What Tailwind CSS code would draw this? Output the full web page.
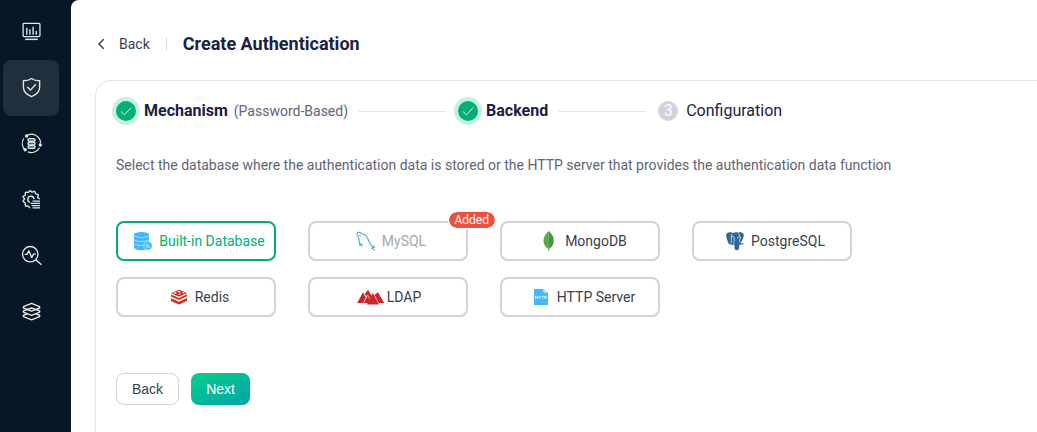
<!DOCTYPE html>
<html lang="en">
<head>
<meta charset="utf-8">
<meta name="viewport" content="width=device-width, initial-scale=1">
<title>Create Authentication</title>
<script src="https://cdn.jsdelivr.net/npm/@tailwindcss/browser@4"></script>
</head>
<body class="flex min-h-screen overflow-x-hidden bg-[#061826] font-['Roboto',sans-serif] text-sm text-[#3a3f4f]">
  <nav aria-label="Main" class="flex w-[71px] shrink-0 flex-col py-1 pl-[3px] text-[#e3e8e8]">
    <a href="#monitoring" aria-label="Monitoring" class="flex size-14 items-center justify-center rounded-lg">
      <svg class="size-5 overflow-visible" viewBox="0 1 19 19" fill="none" stroke="currentColor" stroke-width="1.2"><rect x="2" y="2.200" width="16" height="12.600" rx="1"/><path d="M5.500 6.500V13M8.500 8V13M11.500 5.500V13M14.500 9.500V13" stroke-width="1.300"/><path d="M4 17.500H16" stroke-width="1.400"/></svg>
    </a>
    <a href="#access" aria-label="Access control" aria-current="page" class="flex size-14 items-center justify-center rounded-lg bg-[#202f3c]">
      <svg class="size-5 overflow-visible" viewBox="0 1 19 19" fill="none" stroke="currentColor" stroke-width="1.300" stroke-linejoin="round"><path d="M10 1.400C8.200 2.800 5.200 3.600 2.300 3.600V9.800C2.300 14 5.500 17 10 18.800C14.500 17 17.700 14 17.700 9.800V3.600C14.800 3.600 11.800 2.800 10 1.400Z"/><path d="M6 9.500L9 12.500L14 7"/></svg>
    </a>
    <a href="#integration" aria-label="Integration" class="flex size-14 items-center justify-center rounded-lg">
      <svg class="size-5 overflow-visible" viewBox="0 1 19 19" fill="none" stroke="currentColor" stroke-width="1.200"><path d="M5 2.800A8.700 8.700 0 0 1 18.600 9.500M17.500 14A8.700 8.700 0 0 1 6.500 18M3.700 16A8.700 8.700 0 0 1 2.600 5.300"/><circle cx="5.300" cy="2.900" r="1" fill="currentColor"/><circle cx="18.300" cy="11.500" r="1" fill="currentColor"/><circle cx="4" cy="16" r="1" fill="currentColor"/><g fill="currentColor" fill-opacity=".35"><rect x="6.700" y="5.300" width="6.600" height="2.700" rx="1"/><rect x="6.700" y="8.700" width="6.600" height="2.600" rx="1"/><rect x="6.700" y="12" width="6.600" height="2.700" rx="1"/></g></svg>
    </a>
    <a href="#management" aria-label="Management" class="flex size-14 items-center justify-center rounded-lg">
      <svg class="size-5 overflow-visible" viewBox="0 1 19 19" fill="none" stroke="currentColor" stroke-width="1.300" stroke-linejoin="round"><path d="M8.700 18C8 18 7.700 16.600 6.800 16.300C5.900 16 5 16.900 4.300 16.200C3.600 15.500 4.400 14.400 4.100 13.500C3.800 12.700 2 12.500 2 11.500C2 10.500 3.400 10.400 3.400 9.600C3.400 8.800 2 8.500 2 7.500C2 6.500 3.700 6.500 4.100 5.700C4.500 4.900 3.600 4 4.300 3.300C5 2.600 6 3.600 6.900 3.200C7.700 2.900 7.700 1.700 8.700 1.700C9.600 1.700 9.900 3 10.700 3C11.500 3 11.900 1.900 12.800 2.300C13.800 2.700 13.200 4 13.900 4.600C14.600 5.200 15.900 4.700 16.400 5.500C16.900 6.400 15.600 7 15.800 7.900C16 8.700 17.600 8.900 17.600 9.800"/><path d="M8.400 12.700A3 3 0 1 1 12.400 9.800"/><path d="M11 11.500H18M9 13.700H18M10 15.900H18M11 18H18" stroke-width="1.200"/></svg>
    </a>
    <a href="#diagnose" aria-label="Diagnose" class="flex size-14 items-center justify-center rounded-lg">
      <svg class="size-5 overflow-visible" viewBox="0 1 19 19" fill="none" stroke="currentColor" stroke-width="1.300" stroke-linejoin="round"><circle cx="8.800" cy="8.800" r="7.300"/><path d="M14 14L19.500 18.800"/><path d="M3.500 9H5.700L7.500 5.500L10.200 12L12 8.500H14"/></svg>
    </a>
    <a href="#system" aria-label="System" class="flex size-14 items-center justify-center rounded-lg">
      <svg class="size-5 overflow-visible" viewBox="0 1 19 19" fill="none" stroke="currentColor" stroke-width="1.300" stroke-linejoin="round"><path d="M10 2.400L17.700 5.500V6.700L10 9.700L2.300 6.700V5.500Z"/><path d="M10 6.700L17.700 9.400V10.600L10 13.700L2.300 10.600V9.400Z"/><path d="M6 12.200L2.300 13.600V14.800L10 17.900L17.700 14.800V13.600L14 12.200"/></svg>
    </a>
  </nav>

  <main class="flex min-w-0 flex-1 flex-col rounded-tl-lg bg-white pl-6 pt-8">
    <header class="flex h-6 items-center">
      <a href="#back" class="flex items-center gap-3">
        <svg class="h-3 w-3" viewBox="0 0 12 12" fill="none" stroke="#2b3047" stroke-width="1.300"><path d="M8.700 1.200L4 6L8.700 10.800"/></svg>
        Back
      </a>
      <span class="mx-4 h-3.5 w-px bg-[#d6dae3]"></span>
      <h1 class="text-lg font-bold text-[#1b2045]">Create Authentication</h1>
    </header>

    <section class="mt-6 flex-1 rounded-tl-2xl border-l border-t border-[#e1e3ee] px-5 pt-[18px]">
      <ol class="flex h-6 items-center text-base text-[#1b2045]">
        <li class="flex items-center">
          <span class="flex size-5 items-center justify-center rounded-full bg-[#00b173] ring-4 ring-[#c9efe1]"><svg class="size-3" viewBox="0 0 12 12" fill="none" stroke="#d5f3e8" stroke-width="1"><path d="M1 6.500L4.500 9.800L11.200 2.500"/></svg></span>
          <span class="ml-2 font-bold leading-[26px]">Mechanism</span>
          <span class="ml-1.5 text-sm text-[#5f6577]">(Password-Based)</span>
        </li>
        <li aria-hidden="true" class="ml-2.5 mr-3 h-px w-[88px] bg-[#dfe9e8]"></li>
        <li class="flex items-center" aria-current="step">
          <span class="flex size-5 items-center justify-center rounded-full bg-[#00b173] ring-4 ring-[#c9efe1]"><svg class="size-3" viewBox="0 0 12 12" fill="none" stroke="#d5f3e8" stroke-width="1"><path d="M1 6.500L4.500 9.800L11.200 2.500"/></svg></span>
          <span class="ml-2 font-bold leading-[26px]">Backend</span>
        </li>
        <li aria-hidden="true" class="ml-2.5 mr-3 h-px w-[88px] bg-[#dfe9e8]"></li>
        <li class="flex items-center">
          <span class="flex size-5 items-center justify-center rounded-full bg-[#d0d3de] leading-[26px] text-white">3</span>
          <span class="ml-2 leading-[26px]">Configuration</span>
        </li>
      </ol>

      <form class="mt-8">
        <fieldset>
          <legend class="leading-5 text-[#5f6577]">Select the database where the authentication data is stored or the HTTP server that provides the authentication data function</legend>
          <div class="mt-[46px] flex flex-wrap gap-x-8 gap-y-4">
            <label class="flex h-10 w-40 cursor-pointer items-center justify-center rounded-lg border-2 border-[#00b173] text-[#00b173]">
              <input type="radio" name="backend" value="built-in" checked class="sr-only">
              <svg class="h-6 w-8 shrink-0" viewBox="0 0 32 24"><path d="M7 5.800C7 2 22 2 22 5.800V18.200C22 22 7 22 7 18.200Z" fill="#40b8ff"/><path d="M7 6.500C9.500 9.200 19.500 9.200 22 6.500M7 10.500C9.500 13.200 19.500 13.200 22 10.500M7 14.500C9.500 17.200 18 17.200 22 14.500" fill="none" stroke="#d0eeff" stroke-width=".7"/><circle cx="21" cy="16.800" r="4.200" fill="#40b8ff" stroke="#fff" stroke-width=".5"/><path d="M19 15.200H20.500L23 18.200H19ZM21.500 15.700H23" fill="#8fd6ff" stroke="#b0e3ff" stroke-width=".5"/></svg>
              Built-in Database
            </label>
            <label class="relative flex h-10 w-40 items-center justify-center rounded-lg border-2 border-[#d0d3de] text-[#a4a8b4]">
              <input type="radio" name="backend" value="mysql" disabled class="sr-only">
              <svg class="h-6 w-8 shrink-0" viewBox="0 0 32 24" fill="none" stroke="#45aad8" stroke-width="1.100" stroke-linecap="round" stroke-linejoin="round"><path d="M12.300 17C11.500 16.400 11.300 15.200 11 14.600C10.400 16 10.200 17 9.700 15.800C9.100 14.200 9.400 12 8.900 10.200C8.400 8.400 7.700 7.500 7.300 5.700C6.700 3.400 7.600 3 9.300 3.400C10.500 3.700 11 4.500 12.200 4.700C15.600 5.300 17.700 8.800 18.800 12C19.400 13.800 20 15.600 21.300 16.300C22.500 16.900 23.800 17.100 24.700 18.300C23 18.300 21.900 18.500 21.800 19C22.700 19.600 23.900 20.100 24.500 21"/><path d="M9.700 6.200L10.300 7"/></svg>
              MySQL
              <span class="absolute -right-[30px] -top-3 flex h-[18px] items-center rounded-full border border-white bg-[#eb4f3d] bg-clip-padding px-1.5 text-xs leading-4 text-white">Added</span>
            </label>
            <label class="flex h-10 w-40 cursor-pointer items-center justify-center rounded-lg border-2 border-[#d0d3de]">
              <input type="radio" name="backend" value="mongodb" class="sr-only">
              <svg class="h-6 w-8 shrink-0" viewBox="0 0 32 24"><path d="M15.600 1.800C12.500 5 10.500 8 10.500 12C10.500 15.500 12.500 18 15.300 20L15.600 22.300H16.200L16.200 20Z" fill="#58a84e"/><path d="M15.600 1.800C19 5 20.800 8 20.800 12C20.800 15.500 18.800 18 16.200 20Z" fill="#449644"/><path d="M15.700 18V22.400H16.400L16.300 19Z" fill="#b8c5a0"/></svg>
              MongoDB
            </label>
            <label class="flex h-10 w-40 cursor-pointer items-center justify-center rounded-lg border-2 border-[#d0d3de]">
              <input type="radio" name="backend" value="postgresql" class="sr-only">
              <svg class="h-6 w-8 shrink-0" viewBox="0 0 32 24"><path d="M7.200 7C6.900 4.600 8.500 3.200 11 3.200C12.500 3.200 13.300 3.500 14.200 3.900C15.800 3 18 3.100 19.200 3.700C22 2.700 24.800 3.800 24.800 6.300C24.800 9 23 12 21.500 13.700C22.300 14.500 23.600 14.300 24.800 14.300C24 15.700 22 16 20.400 15.500C20.100 18 20.600 21.200 17.700 21.200C15.200 21.200 15.700 18.500 15.300 15.700C13.900 16.200 12.300 16 12.200 15.200C10.800 16.300 9.400 14.700 8.700 12.500C8 10.500 7.400 8.800 7.200 7Z" fill="#336791"/><path d="M13 4.800C11.800 7.300 12.700 10.200 12.100 14.300M12.600 7.800C14 7.100 15.200 7.500 15.100 9C15 10.800 15.900 12 14.400 13.500M13.900 14.700L15.400 15.100M19.200 4.500C21.300 6.500 21.700 8.700 20.900 10.300C20.200 11.800 20.200 13 21.400 13.700M20.900 8C19.700 7.300 18.300 8 18.700 9.300" fill="none" stroke="#e4edf4" stroke-width=".8"/></svg>
              PostgreSQL
            </label>
            <label class="flex h-10 w-40 cursor-pointer items-center justify-center rounded-lg border-2 border-[#d0d3de]">
              <input type="radio" name="backend" value="redis" class="sr-only">
              <svg class="h-6 w-8 shrink-0" viewBox="0 0 32 24"><g fill="#d82a12"><path d="M8 8.200L16 4.700L24 8L16 11.800Z"/><path d="M8 9.400L16 12.900L24 9.200V11.300L16 15L8 11.500Z"/><path d="M8 13.300L16 16.800L24 13.100V15.800L16 19.500L8 16Z"/></g><path d="M14.800 5.900L16.200 6.200L17.500 5.700L17 6.700L18 7.100L16.500 7.200L16 7.900L15.400 7L14 6.700ZM14.500 9L18 8.600L17 9.900ZM18.800 7.700L20.500 7L22 7.800L20.500 8.500Z" fill="#fff"/><ellipse cx="12" cy="7.900" rx="1.700" ry=".75" fill="#fff"/></svg>
              Redis
            </label>
            <label class="flex h-10 w-40 cursor-pointer items-center justify-center rounded-lg border-2 border-[#d0d3de]">
              <input type="radio" name="backend" value="ldap" class="sr-only">
              <svg class="h-6 w-8 shrink-0" viewBox="0 0 32 24" fill="#cf2328"><path d="M2.200 18L8 7.300L10.800 12.500L8 18Z"/><path d="M10 8.800L13 4.700L16.800 11L15.200 14.100L12.800 9.700L11.300 11.800Z"/><path d="M8.800 18L12.800 10.500L14.900 14.600L13.100 18Z"/><path d="M11.800 19.500L17.800 8L24 19.500Z"/><path d="M19.500 10L23 7.300L29.200 18H23.800Z"/></svg>
              LDAP
            </label>
            <label class="flex h-10 w-40 cursor-pointer items-center justify-center rounded-lg border-2 border-[#d0d3de]">
              <input type="radio" name="backend" value="http" class="sr-only">
              <svg class="h-6 w-8 shrink-0" viewBox="0 0 32 24"><path d="M9 4H18.500V7.500H23V20H9Z" fill="#40b8ff"/><path d="M19 4.200L22.800 7.700H19Z" fill="#a5dcff"/><path d="M10.500 11V14M12.600 11V14M10.500 12.500H12.600M13.300 11.300H15.900M14.600 11.300V14M16.300 11.300H18.900M17.600 11.300V14M19.700 14V11.300H21.500V12.800H19.700" fill="none" stroke="#fff" stroke-width=".7"/></svg>
              HTTP Server
            </label>
          </div>
        </fieldset>
        <div class="mt-14 flex gap-3 font-['Liberation_Sans',sans-serif]">
          <button type="button" class="h-8 rounded-lg border border-[#d0d3de] bg-white px-[15px]">Back</button>
          <button type="submit" class="h-8 rounded-lg bg-linear-to-br from-[#0bd08c] to-[#06a2a4] px-[15px] text-white">Next</button>
        </div>
      </form>
    </section>
  </main>
</body>
</html>
